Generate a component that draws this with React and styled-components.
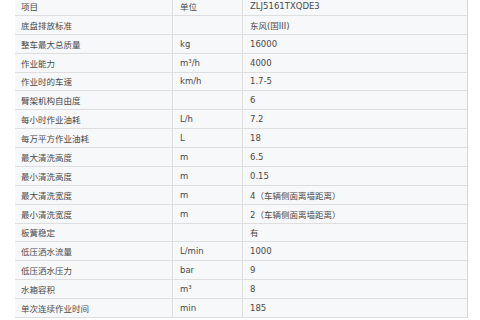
import React from "react";
import styled, { createGlobalStyle } from "styled-components";

const GlobalStyle = createGlobalStyle`
  html, body {
    margin: 0;
    padding: 0;
    background: #fff;
    overflow: hidden;
  }
`;

const rows = [
  ["项目", "单位", "ZLJ5161TXQDE3"],
  ["底盘排放标准", "", "东风(国III)"],
  ["整车最大总质量", "kg", "16000"],
  ["作业能力", "m³/h", "4000"],
  ["作业时的车速", "km/h", "1.7-5"],
  ["臂架机构自由度", "", "6"],
  ["每小时作业油耗", "L/h", "7.2"],
  ["每万平方作业油耗", "L", "18"],
  ["最大清洗高度", "m", "6.5"],
  ["最小清洗高度", "m", "0.15"],
  ["最大清洗宽度", "m", "4（车辆侧面离墙距离）"],
  ["最小清洗宽度", "m", "2（车辆侧面离墙距离）"],
  ["板簧稳定", "", "有"],
  ["低压洒水流量", "L/min", "1000"],
  ["低压洒水压力", "bar", "9"],
  ["水箱容积", "m³", "8"],
  ["单次连续作业时间", "min", "185"],
];

function App() {
  return (
    <>
      <GlobalStyle />
      <Page>
        <SpecTable>
          {rows.map((r, i) => (
            <Row key={i}>
              <Cell>{r[0]}</Cell>
              <Cell divider>{r[1]}</Cell>
              <Cell divider>{r[2]}</Cell>
            </Row>
          ))}
        </SpecTable>
      </Page>
    </>
  );
}

const Page = styled.div`
  width: 480px;
  height: 320px;
  overflow: hidden;
  padding-left: 15px;
  box-sizing: border-box;
`;

const SpecTable = styled.div`
  width: 453px;
  margin-top: -3px;
  background: #f7f8fa;
  border-right: 1px solid #d6d6d6;
  box-sizing: border-box;
`;

const Row = styled.div`
  display: grid;
  grid-template-columns: 157px 70px 1fr;
  height: 18.875px;
  border-bottom: 1px solid #dedede;
  box-sizing: border-box;
`;

const Cell = styled.div`
  display: flex;
  align-items: center;
  padding-left: ${(p) => (p.divider ? "7px" : "6px")};
  border-left: ${(p) => (p.divider ? "1px solid #dedede" : "none")};
  font-family: "DejaVu Sans", "Noto Sans CJK SC", sans-serif;
  font-size: 8.5px;
  color: #4a4a4a;
  white-space: nowrap;
`;

export default App;
